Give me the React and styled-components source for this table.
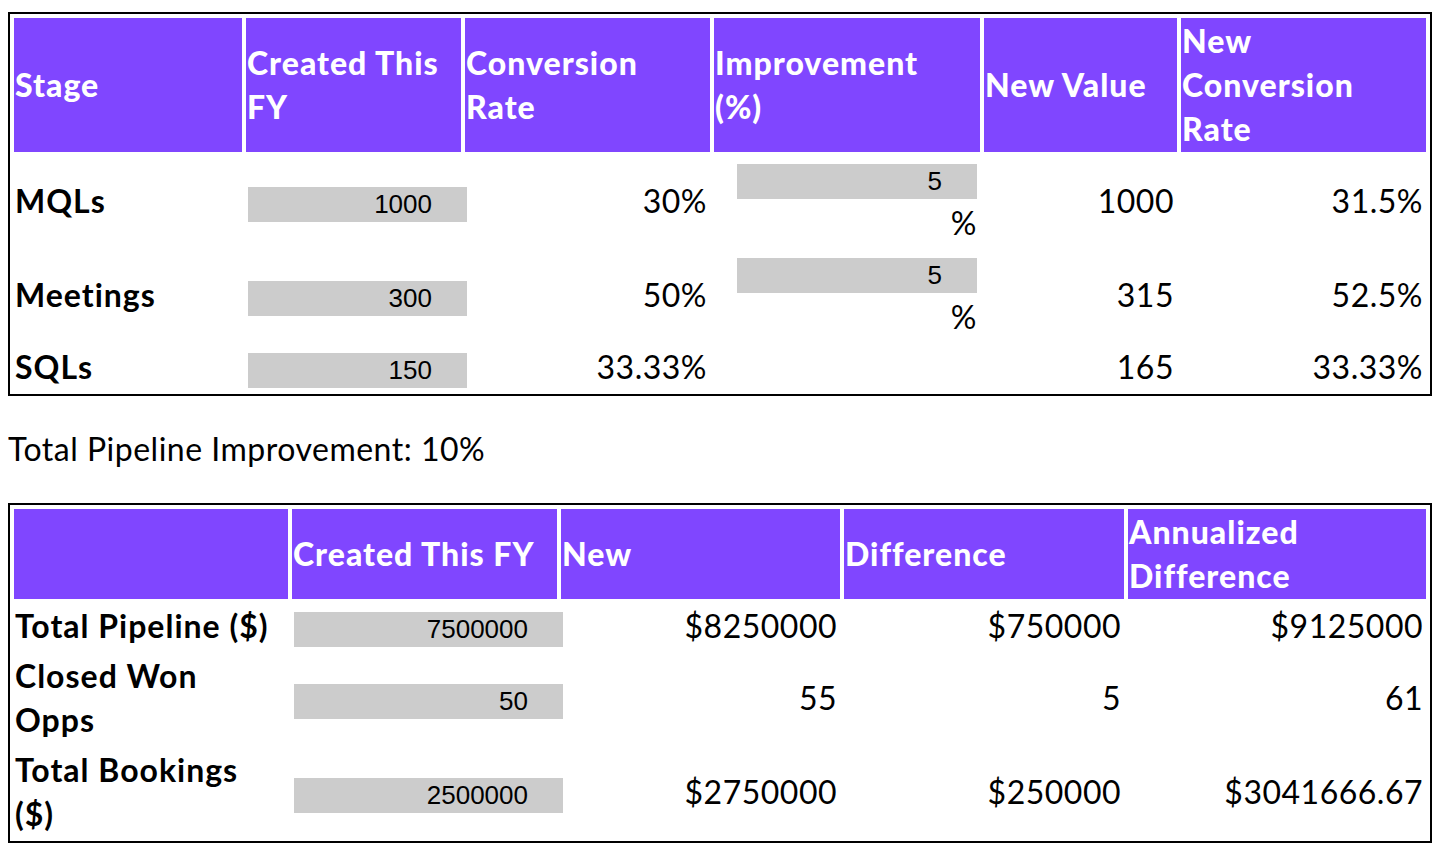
import React from 'react';
import styled, { createGlobalStyle } from 'styled-components';

const GlobalStyle = createGlobalStyle`
  body {
    margin: 8px;
    background: #fff;
    color: #000;
    font-family: Lato, "Open Sans", sans-serif;
  }
`;

const Page = styled.div`
  padding-top: 4px;
`;

const Table = styled.table`
  width: 100%;
  table-layout: fixed;
  border: 2px solid #000;
  border-spacing: 4px;
  font-size: 32px;
  line-height: 44px;
  letter-spacing: 0.5px;
`;

const Th = styled.th`
  background: #8046ff;
  color: #fff;
  font-weight: 900;
  letter-spacing: 1px;
  text-align: left;
  vertical-align: middle;
  padding: 1px 8px 1px 1px;
`;

const Label = styled.td`
  font-weight: 700;
  letter-spacing: 1px;
  text-align: left;
  vertical-align: middle;
  padding: 1px 6px 1px 1px;
`;

const Num = styled.td`
  text-align: right;
  vertical-align: middle;
  padding: 1px 3px;
`;

const InputCell = styled.td`
  text-align: left;
  vertical-align: middle;
  padding: 1px 0 1px 2px;
  overflow: visible;
`;

const PctCell = styled.td`
  text-align: right;
  vertical-align: top;
  padding: 1px 3px 1px 0;
`;

const Field = styled.input`
  box-sizing: border-box;
  display: ${p => (p.$block ? 'block' : 'inline-block')};
  width: ${p => p.$w}px;
  height: 35px;
  margin: ${p => (p.$block ? '7px 0 2px auto' : '0')};
  padding: 0 35px 0 4px;
  border: none;
  background: #cccccc;
  color: #000;
  font-family: "Liberation Sans", Arial, sans-serif;
  font-size: 26px;
  letter-spacing: 0;
  text-align: right;
  vertical-align: middle;
  outline: none;
`;

const Summary = styled.p`
  margin: 31px 0 32px;
  font-size: 32px;
  line-height: 44px;
  letter-spacing: 0.5px;
`;

const stages = [
  { name: 'MQLs', created: 1000, rate: '30%', improvement: 5, value: '1000', newRate: '31.5%' },
  { name: 'Meetings', created: 300, rate: '50%', improvement: 5, value: '315', newRate: '52.5%' },
  { name: 'SQLs', created: 150, rate: '33.33%', improvement: null, value: '165', newRate: '33.33%' },
];

const totals = [
  { name: 'Total Pipeline ($)', created: 7500000, next: '$8250000', diff: '$750000', annual: '$9125000' },
  { name: 'Closed Won Opps', created: 50, next: '55', diff: '5', annual: '61' },
  { name: 'Total Bookings ($)', created: 2500000, next: '$2750000', diff: '$250000', annual: '$3041666.67' },
];

const App = () => {
  return (
    <Page>
      <GlobalStyle />
      <Table>
        <colgroup>
          <col style={{ width: 228 }} />
          <col style={{ width: 215 }} />
          <col style={{ width: 245 }} />
          <col style={{ width: 266 }} />
          <col style={{ width: 193 }} />
          <col style={{ width: 245 }} />
        </colgroup>
        <thead>
          <tr>
            <Th>Stage</Th>
            <Th>Created This FY</Th>
            <Th>Conversion Rate</Th>
            <Th>Improvement (%)</Th>
            <Th>New Value</Th>
            <Th>New Conversion Rate</Th>
          </tr>
        </thead>
        <tbody>
          {stages.map(s => (
            <tr key={s.name}>
              <Label>{s.name}</Label>
              <InputCell>
                <Field type="text" $w={219} defaultValue={s.created} />
              </InputCell>
              <Num>{s.rate}</Num>
              {s.improvement !== null ? (
                <PctCell>
                  <Field type="text" $block $w={240} defaultValue={s.improvement} />
                  %
                </PctCell>
              ) : (
                <PctCell />
              )}
              <Num>{s.value}</Num>
              <Num>{s.newRate}</Num>
            </tr>
          ))}
        </tbody>
      </Table>

      <Summary>Total Pipeline Improvement: 10%</Summary>

      <Table>
        <colgroup>
          <col style={{ width: 274 }} />
          <col style={{ width: 265 }} />
          <col style={{ width: 279 }} />
          <col style={{ width: 280 }} />
          <col style={{ width: 298 }} />
        </colgroup>
        <thead>
          <tr>
            <Th></Th>
            <Th>Created This FY</Th>
            <Th>New</Th>
            <Th>Difference</Th>
            <Th>Annualized Difference</Th>
          </tr>
        </thead>
        <tbody>
          {totals.map(t => (
            <tr key={t.name}>
              <Label>{t.name}</Label>
              <InputCell>
                <Field type="text" $w={269} defaultValue={t.created} />
              </InputCell>
              <Num>{t.next}</Num>
              <Num>{t.diff}</Num>
              <Num>{t.annual}</Num>
            </tr>
          ))}
        </tbody>
      </Table>
    </Page>
  );
};

export default App;
